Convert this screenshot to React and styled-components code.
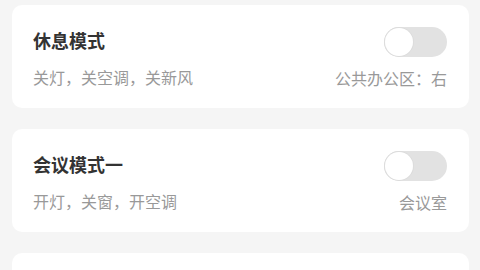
import styled, { createGlobalStyle } from "styled-components";

const GlobalStyle = createGlobalStyle`
  html, body {
    margin: 0;
    padding: 0;
    background: #f5f5f5;
    font-family: "Noto Sans CJK SC", "Noto Sans", sans-serif;
  }
`;

const Page = styled.div`
  display: flex;
  flex-direction: column;
  gap: 21px;
  padding: 5px 11px 0 12px;
  height: 270px;
  overflow: hidden;
  box-sizing: border-box;
`;

const Card = styled.div`
  flex: 0 0 auto;
  display: flex;
  justify-content: space-between;
  height: 103px;
  box-sizing: border-box;
  padding: 21px 22px 0 21px;
  background: #fff;
  border-radius: 10px;
`;

const Info = styled.div`
  display: flex;
  flex-direction: column;
`;

const Title = styled.div`
  font-size: 18px;
  line-height: 28px;
  font-weight: 700;
  color: #333;
`;

const Desc = styled.div`
  margin-top: 12px;
  font-size: 16px;
  line-height: 22px;
  color: #999;
`;

const Side = styled.div`
  display: flex;
  flex-direction: column;
  align-items: flex-end;
  padding-top: 1px;
`;

const Track = styled.div`
  position: relative;
  width: 63px;
  height: 30px;
  border-radius: 15px;
  background: ${(p) => (p.$on ? "#4b8cf5" : "#e2e2e2")};
`;

const Knob = styled.div`
  position: absolute;
  top: 1px;
  left: ${(p) => (p.$on ? "34px" : "1px")};
  width: 28px;
  height: 28px;
  border-radius: 50%;
  background: #fff;
  box-shadow: 0 0 0 1px #dcdcdc;
`;

const Place = styled.div`
  margin-top: 10px;
  font-size: 16px;
  line-height: 22px;
  color: #999;
`;

const modes = [
  { name: "休息模式", desc: "关灯，关空调，关新风", place: "公共办公区：右" },
  { name: "会议模式一", desc: "开灯，关窗，开空调", place: "会议室" },
];

export default function App() {
  return (
    <>
      <GlobalStyle />
      <Page>
        {modes.map((m) => (
          <Card key={m.name}>
            <Info>
              <Title>{m.name}</Title>
              <Desc>{m.desc}</Desc>
            </Info>
            <Side>
              <Track>
                <Knob />
              </Track>
              <Place>{m.place}</Place>
            </Side>
          </Card>
        ))}
        {/* next card, scrolled below the fold */}
        <Card />
      </Page>
    </>
  );
}
